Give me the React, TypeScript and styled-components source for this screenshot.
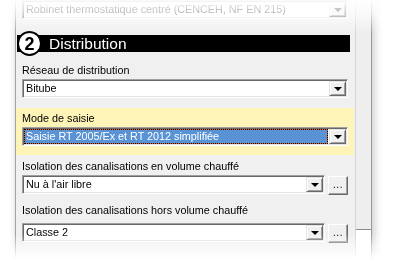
import React from "react";
import styled, { createGlobalStyle } from "styled-components";

const Global = createGlobalStyle`
  html, body { margin: 0; padding: 0; background: #ffffff; }
  body { width: 393px; height: 261px; overflow: hidden; font-family: "Liberation Sans", Arial, sans-serif; }
`;

const Stage = styled.div`
  width: 393px;
  height: 261px;
  overflow: hidden;
  background: #ffffff;
  padding-left: 15px;
  box-sizing: border-box;
  -webkit-mask-image: linear-gradient(to bottom, rgba(0,0,0,0.04) 0px, rgba(0,0,0,0.32) 14px, #000 33px, #000 234px, rgba(0,0,0,0) 259px);
  mask-image: linear-gradient(to bottom, rgba(0,0,0,0.04) 0px, rgba(0,0,0,0.32) 14px, #000 33px, #000 234px, rgba(0,0,0,0) 259px);
`;

const Window = styled.div`
  display: flex;
  width: 357px;
  height: 261px;
  box-shadow: 3px 0 8px rgba(0, 0, 0, 0.18), -2px 0 5px rgba(0,0,0,0.05);
`;

const Panel = styled.div`
  width: 340px;
  box-sizing: border-box;
  border-left: 1px solid #a3a3a3;
  background: #f0f0f0;
  display: flex;
  flex-direction: column;
`;

const ScrollBar = styled.div`
  width: 17px;
  box-sizing: border-box;
  border-left: 1px solid #d6d6d6;
  border-right: 1px solid #9a9a9a;
  display: flex;
  flex-direction: column;
`;

const Thumb = styled.div`
  flex: 0 0 229px;
  background: #eeeeee;
  border-bottom: 1px solid #8c8c8c;
`;

const Track = styled.div`
  flex: 1;
  background: #ffffff;
`;

const Field = styled.div<{ $top: number }>`
  margin-top: ${(p) => p.$top}px;
  padding-left: 6px;
  display: flex;
  flex-direction: column;
`;

const Label = styled.div<{ $gap?: number }>`
  height: 13px;
  line-height: 13px;
  font-size: 10.8px;
  color: #000;
  white-space: nowrap;
  margin-bottom: ${(p) => p.$gap ?? 2}px;
`;

const Row = styled.div`
  display: flex;
  align-items: flex-start;
  gap: 3px;
  width: 326px;
`;

const SelectBox = styled.div`
  box-sizing: border-box;
  flex: 1;
  height: 19px;
  background: #ffffff;
  border-top: 1px solid #a0a0a0;
  border-left: 1px solid #a0a0a0;
  border-bottom: 1px solid #ffffff;
  border-right: 1px solid #ffffff;
  box-shadow: inset 1px 1px 0 #696969, inset -1px -1px 0 #e3e3e3;
  padding: 1px;
  display: flex;
`;

const Value = styled.div<{ $selected?: boolean }>`
  flex: 1;
  min-width: 0;
  box-sizing: border-box;
  padding-left: ${(p) => (p.$selected ? 1 : 2)}px;
  font-size: 10.8px;
  white-space: nowrap;
  overflow: hidden;
  color: ${(p) => (p.$selected ? "#ffffff" : "#000000")};
  background: ${(p) => (p.$selected ? "#5a93d5" : "transparent")};
  border: ${(p) => (p.$selected ? "1px solid #e2661f" : "none")};
  line-height: ${(p) => (p.$selected ? 13 : 15)}px;
  margin-right: ${(p) => (p.$selected ? 1 : 0)}px;
  outline: ${(p) => (p.$selected ? "1px dotted #000" : "none")};
  outline-offset: -1px;
`;

const DropButton = styled.div`
  flex: 0 0 17px;
  box-sizing: border-box;
  height: 15px;
  background: #f0f0f0;
  border-top: 1px solid #e3e3e3;
  border-left: 1px solid #e3e3e3;
  border-right: 1px solid #696969;
  border-bottom: 1px solid #696969;
  box-shadow: inset 1px 1px 0 #ffffff, inset -1px -1px 0 #a0a0a0;
  display: flex;
  align-items: center;
  justify-content: center;
  padding-top: 1px;
`;

const Arrow = styled.div`
  width: 0;
  height: 0;
  border-left: 4px solid transparent;
  border-right: 4px solid transparent;
  border-top: 4px solid #000;
`;

const DotsButton = styled.div`
  flex: 0 0 20px;
  box-sizing: border-box;
  height: 19px;
  margin-top: 1px;
  background: #f0f0f0;
  border-top: 1px solid #ffffff;
  border-left: 1px solid #ffffff;
  border-right: 1px solid #696969;
  border-bottom: 1px solid #696969;
  box-shadow: inset -1px -1px 0 #a0a0a0;
  font-size: 10px;
  line-height: 10px;
  color: #000;
  display: flex;
  align-items: flex-end;
  justify-content: center;
  padding-bottom: 4px;
  letter-spacing: 0.5px;
`;

const Header = styled.div`
  margin-top: 16px;
  margin-left: 1px;
  width: 333px;
  height: 17px;
  background: #000;
  display: flex;
  align-items: center;
  gap: 7px;
`;

const StepCircle = styled.div`
  box-sizing: border-box;
  width: 25px;
  height: 25px;
  margin: -4px 0 -4px 0;
  border-radius: 50%;
  background: #fff;
  border: 2px solid #000;
  display: flex;
  align-items: center;
  justify-content: center;
  font-weight: bold;
  font-size: 18px;
  line-height: 1;
  color: #000;
`;

const HeaderTitle = styled.div`
  color: #fff;
  font-size: 15.5px;
  line-height: 17px;
`;

const Highlight = styled.div`
  margin-top: 10px;
  background: #fff4b8;
  padding: 4px 0 9px 6px;
  margin-right: 1px;
`;

const TopField = styled.div`
  padding-left: 6px;
`;

type SelectProps = { value: string; selected?: boolean; dots?: boolean };

const Select: React.FC<SelectProps> = ({ value, selected, dots }) => (
  <Row>
    <SelectBox>
      <Value $selected={selected}>{value}</Value>
      <DropButton>
        <Arrow />
      </DropButton>
    </SelectBox>
    {dots && <DotsButton>...</DotsButton>}
  </Row>
);

export default function App() {
  return (
    <>
      <Global />
      <Stage>
        <Window>
          <Panel>
            <TopField>
              <Select value="Robinet thermostatique centré (CENCEH, NF EN 215)" />
            </TopField>
            <Header>
              <StepCircle>2</StepCircle>
              <HeaderTitle>Distribution</HeaderTitle>
            </Header>
            <Field $top={12}>
              <Label>Réseau de distribution</Label>
              <Select value="Bitube" />
            </Field>
            <Highlight>
              <Label>Mode de saisie</Label>
              <Select value="Saisie RT 2005/Ex et RT 2012 simplifiée" selected />
            </Highlight>
            <Field $top={5}>
              <Label>Isolation des canalisations en volume chauffé</Label>
              <Select value="Nu à l'air libre" dots />
            </Field>
            <Field $top={9}>
              <Label $gap={6}>Isolation des canalisations hors volume chauffé</Label>
              <Select value="Classe 2" dots />
            </Field>
          </Panel>
          <ScrollBar>
            <Thumb />
            <Track />
          </ScrollBar>
        </Window>
      </Stage>
    </>
  );
}
